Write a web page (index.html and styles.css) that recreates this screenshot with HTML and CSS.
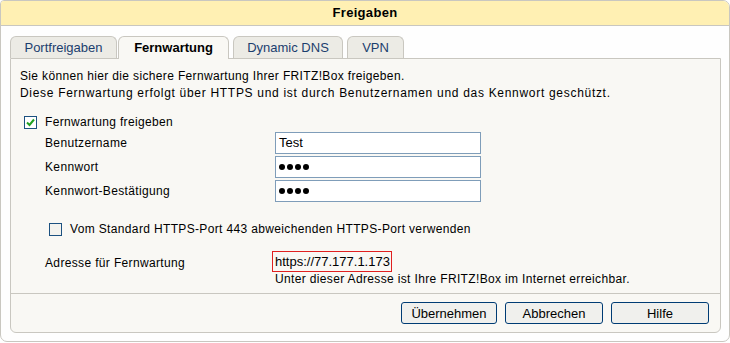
FILE: index.html
```html
<!DOCTYPE html>
<html lang="de">
<head>
    <meta charset="UTF-8">
    <title>Freigaben</title>
    <link rel="stylesheet" href="styles.css">
</head>
<body>
<div class="box">
    <div class="box-head">Freigaben</div>
    <div class="box-body">
        <div class="tabs">
            <div class="tab tab-port">Portfreigaben</div>
            <div class="tab tab-active">Fernwartung</div>
            <div class="tab tab-dns">Dynamic DNS</div>
            <div class="tab tab-vpn">VPN</div>
        </div>
        <div class="panel">
            <div class="panel-main">
                <p class="intro">Sie können hier die sichere Fernwartung Ihrer FRITZ!Box freigeben.<br>
                <span class="intro-wide">Diese Fernwartung erfolgt über HTTPS und ist durch Benutzernamen und das Kennwort geschützt.</span></p>
                <div class="check-row">
                    <span class="check checked">
                        <svg width="9" height="9" viewBox="0 0 9 9"><path d="M1 4.5 L3.5 7 L8 1.5" fill="none" stroke="#21a121" stroke-width="2"/></svg>
                    </span>
                    <span>Fernwartung freigeben</span>
                </div>
                <div class="form-row">
                    <label class="label">Benutzername</label>
                    <div class="field">Test</div>
                </div>
                <div class="form-row">
                    <label class="label">Kennwort</label>
                    <div class="field dots"><i></i><i></i><i></i><i></i></div>
                </div>
                <div class="form-row">
                    <label class="label">Kennwort-Bestätigung</label>
                    <div class="field dots"><i></i><i></i><i></i><i></i></div>
                </div>
                <div class="check-row port-row">
                    <span class="check"></span>
                    <span>Vom Standard HTTPS-Port 443 abweichenden HTTPS-Port verwenden</span>
                </div>
                <div class="addr-row">
                    <div class="label">Adresse für Fernwartung</div>
                    <div class="addr">
                        <div class="addr-box">https://77.177.1.173</div>
                        <div class="addr-hint">Unter dieser Adresse ist Ihre FRITZ!Box im Internet erreichbar.</div>
                    </div>
                </div>
            </div>
            <div class="buttons">
                <button class="btn btn-ok">Übernehmen</button>
                <button class="btn">Abbrechen</button>
                <button class="btn">Hilfe</button>
            </div>
        </div>
    </div>
</div>
</body>
</html>
```

FILE: styles.css
```css
body {
    margin: 0;
    background-color: #FFFFFF;
    font-family: "Liberation Sans", Arial, sans-serif;
    font-size: 12px;
    letter-spacing: 0.35px;
    color: #000000;
}

.box {
    width: 730px;
    height: 342px;
    box-sizing: border-box;
    border: 1px solid #c9c7c0;
    border-radius: 4px 7px 7px 7px;
    background-color: #fefefe;
    overflow: hidden;
}

.box-head {
    height: 24px;
    line-height: 24px;
    background-color: #fff0b3;
    border-bottom: 1px solid #c9c7c0;
    text-align: center;
    font-weight: bold;
    font-size: 13px;
    letter-spacing: 0.3px;
}

.box-body {
    padding: 10px 9px 0 9px;
}

.tabs {
    display: flex;
    height: 22px;
}

.tab {
    box-sizing: border-box;
    height: 22px;
    line-height: 21px;
    margin-right: 4px;
    border: 1px solid #c9c7c0;
    border-bottom: none;
    border-radius: 6px 6px 0 0;
    background-color: #ecebe5;
    color: #1b3e6e;
    text-align: center;
    font-size: 13px;
    letter-spacing: 0;
}

.tab-port {
    width: 107px;
    margin-right: 1px;
}

.tab-active {
    width: 111px;
    height: 23px;
    margin-bottom: -1px;
    position: relative;
    background-color: #f9f8f4;
    color: #000000;
    font-weight: bold;
}

.tab-dns {
    width: 110px;
}

.tab-vpn {
    width: 57px;
}

.panel {
    width: 711px;
    height: 275px;
    box-sizing: border-box;
    border: 1px solid #c9c7c0;
    border-radius: 0 0 6px 6px;
    background-color: #f9f8f4;
    display: flex;
    flex-direction: column;
}

.panel-main {
    flex: 1;
    padding: 9px 9px 0 9px;
    border-bottom: 1px solid #c9c7c0;
}

.intro {
    margin: 0;
    line-height: 17px;
}

.intro-wide {
    letter-spacing: 0.7px;
}

.check-row {
    display: flex;
    align-items: center;
    height: 18px;
    margin-top: 11px;
    margin-left: 4px;
}

.check {
    box-sizing: border-box;
    width: 13px;
    height: 13px;
    border: 1px solid #1c5180;
    background-color: #f4f3ee;
    margin-right: 8px;
    display: flex;
    align-items: center;
    justify-content: center;
}

.checked {
    background-color: #ffffff;
}

.form-row {
    display: flex;
    align-items: center;
    height: 24px;
    padding-left: 25px;
}

.form-row:first-of-type {
    margin-top: 2px;
}

.label {
    width: 230px;
}

.field {
    box-sizing: border-box;
    width: 206px;
    height: 22px;
    line-height: 20px;
    border: 1px solid #7f9db9;
    background-color: #ffffff;
    padding-left: 3px;
    font-size: 13px;
    letter-spacing: 0;
}

.dots {
    display: flex;
    align-items: center;
    gap: 2px;
}

.dots i {
    width: 6px;
    height: 6px;
    border-radius: 50%;
    background-color: #000000;
}

.port-row {
    margin-top: 17px;
    margin-left: 29px;
}

.addr-row {
    display: flex;
    margin-top: 13px;
    padding-left: 25px;
}

.addr-row .label {
    padding-top: 5px;
    width: 227px;
}

.addr-box {
    display: inline-block;
    box-sizing: border-box;
    height: 21px;
    line-height: 19px;
    border: 1px solid #e02020;
    padding: 0 1px 0 2px;
    font-size: 13px;
    letter-spacing: 0;
}

.addr-hint {
    padding-left: 3px;
    line-height: 15px;
}

.buttons {
    height: 38px;
    display: flex;
    justify-content: flex-end;
    align-items: center;
    padding-right: 11px;
}

.btn {
    box-sizing: border-box;
    width: 98px;
    height: 22px;
    margin-left: 8px;
    border: 1px solid #003c74;
    border-radius: 3px;
    background-color: #f0f0ed;
    font-family: "Liberation Sans", Arial, sans-serif;
    font-size: 13px;
    color: #000000;
    padding: 0;
}

.btn-ok {
    width: 96px;
}
```
